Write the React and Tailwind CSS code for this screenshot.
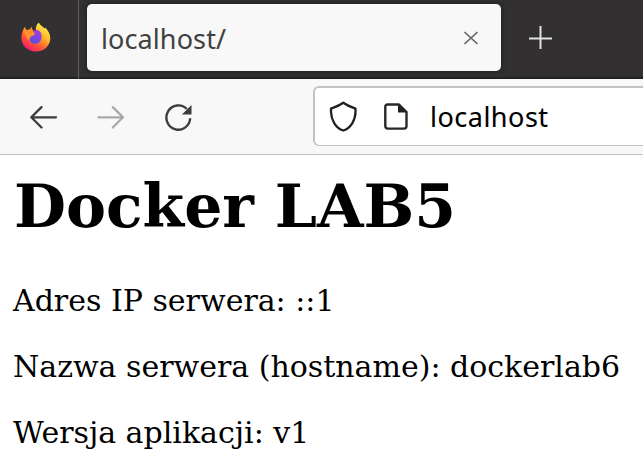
function FirefoxLogo() {
  return (
    <svg width="32" height="32" viewBox="0 0 32 32" className="shrink-0">
      <defs>
        <linearGradient id="flame" x1="0.85" y1="0.1" x2="0.25" y2="1">
          <stop offset="0" stopColor="#fff04a" />
          <stop offset="0.35" stopColor="#ffb52b" />
          <stop offset="0.65" stopColor="#ff5a35" />
          <stop offset="1" stopColor="#f5156c" />
        </linearGradient>
        <linearGradient id="globe" x1="0.7" y1="0" x2="0.3" y2="1">
          <stop offset="0" stopColor="#a63be0" />
          <stop offset="1" stopColor="#5b4ee0" />
        </linearGradient>
      </defs>
      <path d="M4.6 5 L6.6 8.5 C8 7.5 9.3 7.3 10.3 7.7 L11.2 4.8 L12.8 8.5 L14.2 9.5 L16.4 9 C15 6 16.6 2 19 0.8 C20 3.5 22.5 4 24.7 6.5 L25.2 5.4 C28 8 30.2 12 30.3 16 C30.2 24 24 29.6 16 29.6 C8 29.6 1.5 24 1.4 15.8 C1.4 11.5 2.8 8 4.6 5 Z" fill="url(#flame)" />
      <path d="M14 8.6 C18 6.6 21.4 9.5 21.6 14 C21.8 18.5 19 21.8 15 21.8 C11.5 21.8 9.3 19 9.5 16 C9.7 12 12 11 14 8.6 Z" fill="url(#globe)" />
      <path d="M4.6 5 L6.6 8.5 C8 7.5 9.3 7.3 10.3 7.7 L11.2 4.8 L13.2 9.5 L15.2 12 C14 13.6 12 13.6 11 14.6 C9.8 15.8 9.3 17 9.6 18.5 C7 17 4 13 4.6 5 Z" fill="#ff932a" />
    </svg>
  );
}

function TabBar() {
  return (
    <header className="flex h-[79px] items-start border-b-2 border-[#222222] bg-[#323031]">
      <div className="flex h-[79px] w-[79px] items-center border-r border-[#615f60] pl-5 pb-[3px]">
        <FirefoxLogo />
      </div>
      <div className="mt-1 ml-2 flex h-[67px] w-[414px] items-center justify-between rounded-[5px] bg-[#f8f8f8] pr-[22px] pl-[14px] shadow-[0_0_5px_#1b1b1b]">
        <span className="pt-[3px] font-['Noto_Sans',sans-serif] text-[27px] leading-9 tracking-[0.1px] text-[#414141]">localhost/</span>
        <svg width="16" height="16" viewBox="0 0 16 16" fill="none" stroke="#666666" strokeWidth="1.7">
          <path d="M1.5 2 L14.5 14 M14.5 2 L1.5 14" />
        </svg>
      </div>
      <svg className="mt-[26px] ml-7" width="24" height="24" viewBox="0 0 24 24" fill="none" stroke="#e0e0e0" strokeWidth="2">
        <path d="M0 12.5 H23 M11.5 0 V23" />
      </svg>
    </header>
  );
}

function Toolbar() {
  return (
    <nav className="flex h-[76px] items-center border-b border-[#c2c2c2] bg-[#f8f8f8] pl-[30px]">
      <svg width="28" height="26" viewBox="0 0 28 26" fill="none" stroke="#3c3c3c" strokeWidth="2.3" strokeLinecap="round" strokeLinejoin="round">
        <path d="M26 13.3 H1.5 M11.5 3.1 L1.3 13.3 L11.5 23.5" />
      </svg>
      <svg className="ml-[39px]" width="28" height="26" viewBox="0 0 28 26" fill="none" stroke="#a9a9a9" strokeWidth="2.3" strokeLinecap="round" strokeLinejoin="round">
        <path d="M1.5 13.3 H26 M15.8 3.1 L26 13.3 L15.8 23.5" />
      </svg>
      <svg className="ml-[40px]" width="28" height="28" viewBox="0 0 28 28" fill="none" stroke="#3c3c3c" strokeWidth="2.4">
        <path d="M21.8 6 A11.9 12.2 0 1 0 25.2 15.3" />
        <path d="M26.5 2 V11.6 H16.9 Z" fill="#3c3c3c" stroke="none" />
      </svg>
      <div className="mb-px ml-[120px] flex h-[60px] flex-1 items-center rounded-l-[6px] border-2 border-r-0 border-b border-[#c2c2c2] bg-white pl-[14px]">
        <svg width="30" height="32" viewBox="0 0 30 32" fill="none" stroke="#202020" strokeWidth="2.3" strokeLinejoin="round">
          <path d="M14.3 1.7 C10 4.8 6 6.1 2 7.6 V11 C2.3 19 6.5 27 14.3 29.5 C22 27 26.3 19 26.5 11 V7.6 C22.5 6.1 18.5 4.8 14.3 1.7 Z" />
        </svg>
        <svg className="ml-[25px]" width="24" height="28" viewBox="0 0 24 28" fill="none" stroke="#282828" strokeWidth="2.4" strokeLinejoin="round">
          <path d="M3.8 1.5 H15 L22.5 9 V23.1 Q22.5 25.6 20 25.6 H3.8 Q1.3 25.6 1.3 23.1 V4 Q1.3 1.5 3.8 1.5 Z" />
          <path d="M14 1.5 V9.4 H22.5 Z" fill="#202020" stroke="none" />
        </svg>
        <span className="ml-[22px] font-['Noto_Sans',sans-serif] text-[27px] leading-9 tracking-[0.5px] text-black [-webkit-text-stroke:0.1px_black]">localhost</span>
      </div>
    </nav>
  );
}

export default function App() {
  return (
    <div className="flex h-[468px] w-[643px] flex-col overflow-hidden bg-white">
      <TabBar />
      <Toolbar />
      <main className="pt-[16px] pl-[13px] font-['DejaVu_Serif',serif] whitespace-nowrap text-black">
        <h1 className="pl-px text-[60px] leading-[70px] font-bold">Docker LAB5</h1>
        <p className="mt-[42px] text-[30px] leading-9">Adres IP serwera: ::1</p>
        <p className="mt-[30px] text-[30px] leading-9">Nazwa serwera (hostname): dockerlab6</p>
        <p className="mt-[30px] text-[30px] leading-9">Wersja aplikacji: v1</p>
      </main>
    </div>
  );
}
